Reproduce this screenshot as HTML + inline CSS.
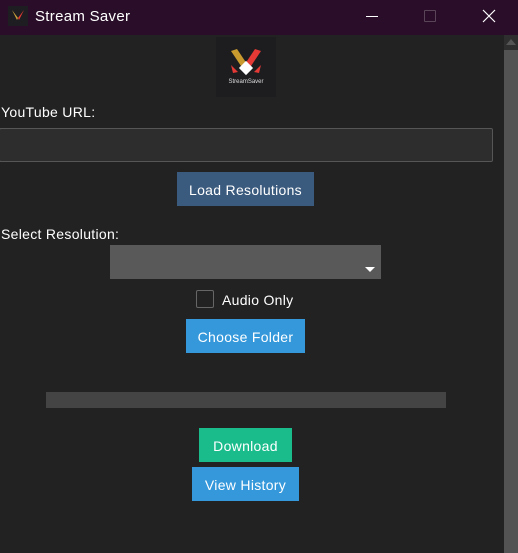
<!DOCTYPE html>
<html><head><style>
*{margin:0;padding:0;box-sizing:border-box}
body{width:518px;height:553px;background:#222222;position:relative;overflow:hidden;font-family:"Liberation Sans",sans-serif;color:#fff}
.a{position:absolute}
.t{letter-spacing:0.3px}
.btn{position:absolute;color:#fff;font-size:14px;letter-spacing:0.3px;display:flex;align-items:center;justify-content:center;padding-top:1px}
</style></head><body>
<div class="a" style="left:0;top:0;width:518px;height:35px;background:#2a0e29"></div>
<div class="a" style="left:8px;top:6px;width:20px;height:20px;background:#1e1e22"></div>
<svg class="a" style="left:8px;top:6px" width="20" height="20"><path d="M4 4 L10 12 L9 14 Z" fill="#c9a23a"/><path d="M16 4 L10 12 L11 14 Z" fill="#e53935"/></svg>
<div class="a t" style="left:35px;top:8px;font-size:15px;color:#fff">Stream Saver</div>
<div class="a" style="left:366px;top:16px;width:12px;height:1px;background:#fff"></div>
<div class="a" style="left:424px;top:10px;width:12px;height:12px;border:1px solid #5a4458;border-radius:1px"></div>
<svg class="a" style="left:482px;top:9px" width="14" height="14"><path d="M1 1 L13 13 M13 1 L1 13" stroke="#fff" stroke-width="1.2"/></svg>
<div class="a" style="left:216px;top:37px;width:60px;height:60px;background:#1d1d20"></div>
<svg class="a" style="left:216px;top:37px" width="60" height="60">
<path d="M15 14 L21 12 L31 27 L27 32 Z" fill="#c99a2e"/>
<path d="M45 14 L39 12 L29 27 L33 32 Z" fill="#e53935"/>
<path d="M15 28 L22 35 L17 36 Z M45 28 L38 35 L43 36 Z" fill="#e53935"/>
<rect x="25" y="26" width="10" height="10" transform="rotate(45 30 31)" fill="#fff"/>
<text x="30" y="46" font-size="6" fill="#ddd" text-anchor="middle" font-family="Liberation Sans">StreamSaver</text>
</svg>
<div class="a t" style="left:1px;top:104px;font-size:14px">YouTube URL:</div>
<div class="a" style="left:-1px;top:128px;width:494px;height:34px;background:#2d2d2d;border:1px solid #565656;border-radius:2px"></div>
<div class="btn" style="left:177px;top:172px;width:137px;height:34px;background:#3a5a7e">Load Resolutions</div>
<div class="a t" style="left:1px;top:226px;font-size:14px">Select Resolution:</div>
<div class="a" style="left:110px;top:245px;width:271px;height:34px;background:#595959"></div>
<svg class="a" style="left:365px;top:267px" width="10" height="6"><path d="M0 0 L10 0 L5 5 Z" fill="#fff"/></svg>
<div class="a" style="left:196px;top:290px;width:18px;height:18px;border:1px solid #666;border-radius:2px"></div>
<div class="a t" style="left:222px;top:292px;font-size:14px">Audio Only</div>
<div class="btn" style="left:186px;top:319px;width:119px;height:34px;background:#3498db">Choose Folder</div>
<div class="a" style="left:46px;top:392px;width:400px;height:16px;background:#444"></div>
<div class="btn" style="left:199px;top:428px;width:93px;height:34px;background:#1abc8c">Download</div>
<div class="btn" style="left:192px;top:467px;width:107px;height:34px;background:#3498db">View History</div>
<div class="a" style="left:504px;top:35px;width:14px;height:518px;background:#535353"></div>
<div class="a" style="left:504px;top:35px;width:14px;height:15px;background:#2e2e2e"></div>
<svg class="a" style="left:506px;top:39px" width="10" height="6"><path d="M0 6 L10 6 L5 0 Z" fill="#555"/></svg>
</body></html>
